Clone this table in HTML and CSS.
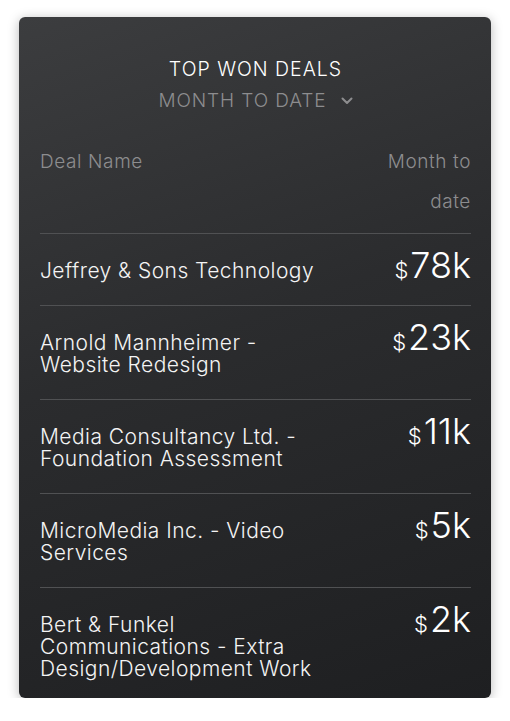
FILE: index.html
```html
<!DOCTYPE html>
<html>
<head>
<meta charset="utf-8">
<link rel="stylesheet" href="styles.css">
</head>
<body>
<div class="card">
  <div class="head">
    <div class="title">TOP WON DEALS</div>
    <div class="period">MONTH TO DATE
      <svg class="chev" width="12" height="8" viewBox="0 0 12 8"><path d="M1.5 1.5 L6 6 L10.5 1.5" fill="none" stroke="#8d8d8f" stroke-width="2" stroke-linecap="round" stroke-linejoin="round"/></svg>
    </div>
  </div>
  <div class="cols">
    <div class="col-name">Deal Name</div>
    <div class="col-val">Month to date</div>
  </div>
  <div class="row"><div class="name">Jeffrey &amp; Sons Technology</div><div class="val"><span class="cur">$</span>78k</div></div>
  <div class="row"><div class="name">Arnold Mannheimer - Website Redesign</div><div class="val"><span class="cur">$</span>23k</div></div>
  <div class="row"><div class="name">Media Consultancy Ltd. - Foundation Assessment</div><div class="val"><span class="cur">$</span>11k</div></div>
  <div class="row"><div class="name">MicroMedia Inc. - Video Services</div><div class="val"><span class="cur">$</span>5k</div></div>
  <div class="row"><div class="name">Bert &amp; Funkel Communications - Extra Design/Development Work</div><div class="val"><span class="cur">$</span>2k</div></div>
</div>
</body>
</html>
```
FILE: styles.css
```css
html, body { margin: 0; padding: 0; background: #fff; }
body { font-family: Inter, "Noto Sans", sans-serif; }
.card {
  margin: 17px 0 0 19px;
  width: 472px;
  height: 681px;
  box-sizing: border-box;
  padding: 0 20px 0 21px;
  border-radius: 6px;
  background: linear-gradient(160deg, #3c3d3f 0%, #2b2c2e 45%, #1e1f21 100%);
  box-shadow: 0 2px 12px rgba(0,0,0,0.28);
  overflow: hidden;
}
.head { text-align: center; padding-top: 37px; }
.title { color: #fff; font-size: 19.5px; line-height: 31px; letter-spacing: 1px; font-weight: 350; }
.period { color: #8d8d8f; font-size: 19px; line-height: 31px; letter-spacing: 0.9px; font-weight: 350; display: flex; justify-content: center; align-items: center; gap: 10px; }
.chev { margin-left: 4px; }
.cols { display: flex; justify-content: space-between; margin-top: 26px; padding-bottom: 11px; border-bottom: 1px solid #505153; color: #8d8d8f; font-size: 19px; line-height: 40px; letter-spacing: 0.6px; font-weight: 350; }
.col-val { width: 90px; text-align: right; }
.row { display: flex; justify-content: space-between; align-items: baseline; padding: 20px 0 23px; border-bottom: 1px solid #505153; }
.row:last-child { border-bottom: none; }
.name { width: 283px; color: #f4f4f4; font-size: 21px; line-height: 22px; letter-spacing: 0.45px; font-weight: 330; }
.val { color: #fff; font-size: 36px; line-height: 22px; font-weight: 300; white-space: nowrap; }
.cur { font-size: 22px; margin-right: 2px; }
```
